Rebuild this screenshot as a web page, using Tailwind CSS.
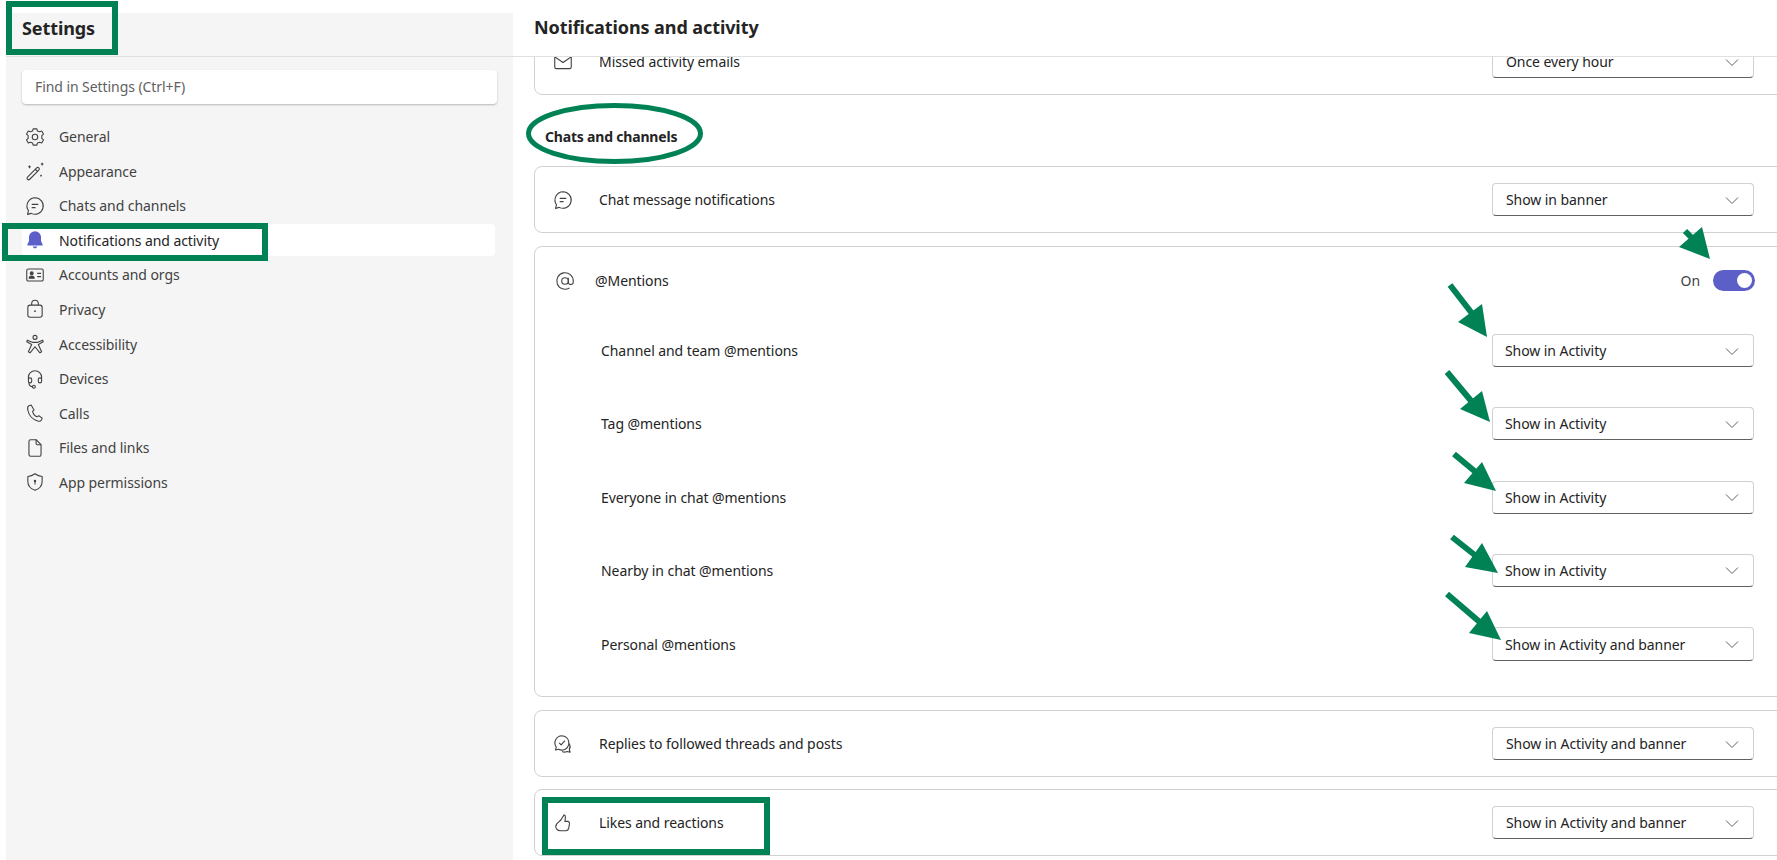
<!DOCTYPE html>
<html lang="en">

<head>
    <meta charset="UTF-8">
    <title>Settings</title>
    <script src="https://cdn.jsdelivr.net/npm/@tailwindcss/browser@4"></script>
</head>

<body class="bg-white text-[#242424] font-['Noto_Sans',sans-serif] text-[14px] tracking-[-0.07px]">
    <div class="relative flex w-[1777px] h-[860px] overflow-hidden pl-[6px]">

        <!-- sidebar -->
        <aside class="w-[507px] mt-[13px] shrink-0 bg-[#f5f5f5] flex flex-col">
            <div class="h-[44px] border-b border-[#e0e0e0] pl-[16px] pb-[13px] flex items-center">
                <h1 class="text-[18px] font-bold tracking-[-0.09px]">Settings</h1>
            </div>
            <div class="mt-[13px] mx-[16px] h-[34px] bg-white rounded-[4px] shadow-[0_1px_2px_rgba(0,0,0,0.25)] flex items-center px-[13px] pb-[1px] text-[#616161]">
                Find in Settings (Ctrl+F)
            </div>
            <nav class="mt-[16.5px] mx-[16px] w-[473px] flex flex-col gap-[2.6px] text-[#424242]">
                <a class="h-[32px] flex items-center gap-[13px] px-[2px]">
                    <svg class="w-[22px] h-[22px]" viewBox="0 0 20 20" fill="none" stroke="#424242"><circle cx="10" cy="10" r="2.5"/><path d="M8.3 2.6 7.8 4.6 5.8 5.2 3.9 4.6 2.3 7.3 3.8 8.7V11.3L2.3 12.7 3.9 15.4 5.8 14.8 7.8 15.4 8.3 17.4H11.7L12.2 15.4 14.2 14.8 16.1 15.4 17.7 12.7 16.2 11.3V8.7L17.7 7.3 16.1 4.6 14.2 5.2 12.2 4.6 11.7 2.6Z" stroke-linejoin="round"/></svg>
                    General
                </a>
                <a class="h-[32px] flex items-center gap-[13px] px-[2px]">
                    <svg class="w-[22px] h-[22px]" viewBox="0 0 20 20" fill="none" stroke="#424242"><path d="M3.2 15.5 11.5 7.2a1.4 1.4 0 0 1 2 2L5.2 17.5a1.4 1.4 0 0 1-2-2ZM10.3 8.4l2 2" stroke-linejoin="round"/><path d="M5 5v2.4M3.8 6.2h2.4M16.5 2.5v2.4M15.3 3.7h2.4M15.5 13.5v1.6M14.7 14.3h1.6"/></svg>
                    Appearance
                </a>
                <a class="h-[32px] flex items-center gap-[13px] px-[2px]">
                    <svg class="w-[22px] h-[22px]" viewBox="0 0 20 20" fill="none" stroke="#424242"><path d="M10 2.5a7.5 7.5 0 1 1-3.4 14.2l-3.4.9.9-3.3A7.5 7.5 0 0 1 10 2.500Z" stroke-linejoin="round"/><path d="M7 8.500h6M7 11.500h3.500"/></svg>
                    Chats and channels
                </a>
                <a class="h-[32px] flex items-center gap-[13px] px-[2px] bg-white rounded-[4px] text-[#242424]">
                    <svg class="w-[22px] h-[22px]" viewBox="0 0 20 20" fill="#5b5fc7"><path d="M10 2a5.500 5.500 0 0 0-5.500 5.500v3.300L3 14.300a.6.600 0 0 0 .5.800h13a.6.600 0 0 0 .5-.8l-1.500-3.500V7.500A5.500 5.500 0 0 0 10 2Z"/><path d="M7.800 16a2.300 2.300 0 0 0 4.400 0Z"/></svg>
                    Notifications and activity
                </a>
                <a class="h-[32px] flex items-center gap-[13px] px-[2px]">
                    <svg class="w-[22px] h-[22px]" viewBox="0 0 20 20" fill="none" stroke="#424242"><rect x="2.500" y="4.500" width="15" height="11" rx="1.500"/><circle cx="7" cy="8.500" r="1.300" fill="#424242"/><path d="M4.800 13c0-2.600 4.400-2.600 4.400 0Z" fill="#424242"/><path d="M12 8.500h3.500M12 11.500h3.500"/></svg>
                    Accounts and orgs
                </a>
                <a class="h-[32px] flex items-center gap-[13px] px-[2px]">
                    <svg class="w-[22px] h-[22px]" viewBox="0 0 20 20" fill="none" stroke="#424242"><rect x="3.500" y="6.500" width="13" height="11" rx="2"/><path d="M7 6.500V5a3 3 0 0 1 6 0v1.500"/><circle cx="10" cy="12" r=".8" fill="#424242" stroke="none"/></svg>
                    Privacy
                </a>
                <a class="h-[32px] flex items-center gap-[13px] px-[2px]">
                    <svg class="w-[22px] h-[22px]" viewBox="0 0 20 20" fill="none" stroke="#424242" stroke-linejoin="round"><circle cx="10" cy="4" r="1.800"/><path d="M3 6.500 7.500 8.500H12.500L17 6.500 17.500 8 13 10.500 16 17 14.500 18 10 12.500 5.500 18 4 17 7 10.500 2.500 8Z"/></svg>
                    Accessibility
                </a>
                <a class="h-[32px] flex items-center gap-[13px] px-[2px]">
                    <svg class="w-[22px] h-[22px]" viewBox="0 0 20 20" fill="none" stroke="#424242"><path d="M4 10V8.500a6 6 0 0 1 12 0V10"/><rect x="4" y="9" width="3" height="4.500" rx="1.500"/><rect x="13" y="9" width="3" height="4.500" rx="1.500"/><path d="M4.500 13.500c0 2.500 1.500 3.500 3.500 3.500"/><circle cx="9" cy="17" r="1.300"/></svg>
                    Devices
                </a>
                <a class="h-[32px] flex items-center gap-[13px] px-[2px]">
                    <svg class="w-[22px] h-[22px]" viewBox="0 0 20 20" fill="none" stroke="#424242" stroke-linejoin="round"><path d="M6.500 2.800 4.500 3.500C3.300 4 3 5.500 3.500 7.500 4.500 12 8 16 12.500 17.300c1.500.4 2.800 0 3.300-1l.7-1.600-3-2.200-1.700 1C10 12.800 8.300 10.500 7.800 8.500l1.300-1.300Z"/></svg>
                    Calls
                </a>
                <a class="h-[32px] flex items-center gap-[13px] px-[2px]">
                    <svg class="w-[22px] h-[22px]" viewBox="0 0 20 20" fill="none" stroke="#424242" stroke-linejoin="round"><path d="M4.500 4a1.500 1.500 0 0 1 1.500-1.500h5l4.500 4.500v9a1.500 1.500 0 0 1-1.500 1.500H6A1.500 1.500 0 0 1 4.500 16Z"/><path d="M11 2.500V6a1 1 0 0 0 1 1h3.500"/></svg>
                    Files and links
                </a>
                <a class="h-[32px] flex items-center gap-[13px] px-[2px]">
                    <svg class="w-[22px] h-[22px]" viewBox="0 0 20 20" fill="none" stroke="#424242" stroke-linejoin="round"><path d="M10 2.500c2 1.500 4.200 2.300 6.500 2.500v4.500c0 3.700-2.200 6.500-6.500 8-4.300-1.500-6.500-4.300-6.500-8V5C5.800 4.800 8 4 10 2.500Z"/><circle cx="10" cy="9" r="1.100" fill="#424242" stroke="none"/><path d="M10 9v3.200"/></svg>
                    App permissions
                </a>
            </nav>
        </aside>

        <!-- content -->
        <main class="flex-1 flex flex-col min-w-0">
            <div class="h-[57px] shrink-0 border-b border-[#e0e0e0] pl-[21px] pb-[2px] flex items-center">
                <h2 class="text-[18px] font-bold tracking-[-0.09px]">Notifications and activity</h2>
            </div>
            <div class="flex-1 overflow-hidden pl-[21px]">
                <div class="-mt-[29px] w-[1253px] flex flex-col">

                    <section class="h-[67px] border border-[#d1d1d1] rounded-[8px] flex items-center justify-between pl-[17px] pr-[32px]">
                        <div class="flex items-center gap-[25px]">
                            <svg class="w-[22px] h-[22px]" viewBox="0 0 20 20" fill="none" stroke="#424242"><rect x="2.500" y="4" width="15" height="12" rx="1.500"/><path d="M2.800 5.500 10 10.500l7.200-5"/></svg>
                            Missed activity emails
                        </div>
                        <div class="w-[262px] h-[33px] bg-white border border-[#d1d1d1] border-b-[#616161] rounded-[4px] flex items-center justify-between pl-[13px] pr-[13px]">
                            Once every hour
                            <svg class="w-[16px] h-[16px]" viewBox="0 0 16 16" fill="none" stroke="#616161"><path d="M2 5.500 8 11.500 14 5.500"/></svg>
                        </div>
                    </section>

                    <h3 class="h-[71px] pt-[11px] flex items-center pl-[11px] font-bold tracking-[-0.19px]">Chats and channels</h3>

                    <section class="h-[67px] border border-[#d1d1d1] rounded-[8px] flex items-center justify-between pl-[17px] pr-[32px]">
                        <div class="flex items-center gap-[25px]">
                            <svg class="w-[22px] h-[22px]" viewBox="0 0 20 20" fill="none" stroke="#424242"><path d="M10 2.500a7.500 7.500 0 1 1-3.400 14.200l-3.400.9.900-3.300A7.500 7.500 0 0 1 10 2.500Z" stroke-linejoin="round"/><path d="M7 8.500h6M7 11.500h3.500"/></svg>
                            Chat message notifications
                        </div>
                        <div class="w-[262px] h-[33px] bg-white border border-[#d1d1d1] border-b-[#616161] rounded-[4px] flex items-center justify-between pl-[13px] pr-[13px]">
                            Show in banner
                            <svg class="w-[16px] h-[16px]" viewBox="0 0 16 16" fill="none" stroke="#616161"><path d="M2 5.500 8 11.500 14 5.500"/></svg>
                        </div>
                    </section>

                    <section class="mt-[13px] h-[451px] border border-[#d1d1d1] rounded-[8px] flex flex-col pl-[19px] pr-[32px]">
                        <div class="h-[67px] shrink-0 flex items-center justify-between -mr-[1px]">
                            <div class="flex items-center gap-[19px]">
                                <svg class="w-[22px] h-[22px]" viewBox="0 0 20 20" fill="none" stroke="#424242"><circle cx="10" cy="10" r="3"/><path d="M13 7v4a2 2 0 0 0 4.500 0V10a7.500 7.500 0 1 0-3.500 6.300"/></svg>
                                @Mentions
                            </div>
                            <div class="flex items-center gap-[13px] text-[#424242]">
                                On
                                <div class="w-[42px] h-[21px] bg-[#5b5fc7] rounded-full flex items-center justify-end pr-[3px]">
                                    <div class="w-[15px] h-[15px] bg-white rounded-full"></div>
                                </div>
                            </div>
                        </div>
                        <div class="mt-[20px] flex flex-col gap-[40.25px] pl-[47px]">
                            <div class="flex items-center justify-between">
                                Channel and team @mentions
                                <div class="w-[262px] h-[33px] bg-white border border-[#d1d1d1] border-b-[#616161] rounded-[4px] flex items-center justify-between pl-[12px] pr-[13px]">
                                    Show in Activity
                                    <svg class="w-[16px] h-[16px]" viewBox="0 0 16 16" fill="none" stroke="#616161"><path d="M2 5.500 8 11.500 14 5.500"/></svg>
                                </div>
                            </div>
                            <div class="flex items-center justify-between">
                                Tag @mentions
                                <div class="w-[262px] h-[33px] bg-white border border-[#d1d1d1] border-b-[#616161] rounded-[4px] flex items-center justify-between pl-[12px] pr-[13px]">
                                    Show in Activity
                                    <svg class="w-[16px] h-[16px]" viewBox="0 0 16 16" fill="none" stroke="#616161"><path d="M2 5.500 8 11.500 14 5.500"/></svg>
                                </div>
                            </div>
                            <div class="flex items-center justify-between">
                                Everyone in chat @mentions
                                <div class="w-[262px] h-[33px] bg-white border border-[#d1d1d1] border-b-[#616161] rounded-[4px] flex items-center justify-between pl-[12px] pr-[13px]">
                                    Show in Activity
                                    <svg class="w-[16px] h-[16px]" viewBox="0 0 16 16" fill="none" stroke="#616161"><path d="M2 5.500 8 11.500 14 5.500"/></svg>
                                </div>
                            </div>
                            <div class="flex items-center justify-between">
                                Nearby in chat @mentions
                                <div class="w-[262px] h-[33px] bg-white border border-[#d1d1d1] border-b-[#616161] rounded-[4px] flex items-center justify-between pl-[12px] pr-[13px]">
                                    Show in Activity
                                    <svg class="w-[16px] h-[16px]" viewBox="0 0 16 16" fill="none" stroke="#616161"><path d="M2 5.500 8 11.500 14 5.500"/></svg>
                                </div>
                            </div>
                            <div class="flex items-center justify-between">
                                Personal @mentions
                                <div class="w-[262px] h-[34px] bg-white border border-[#d1d1d1] border-b-[#616161] rounded-[4px] flex items-center justify-between pl-[12px] pr-[13px]">
                                    Show in Activity and banner
                                    <svg class="w-[16px] h-[16px]" viewBox="0 0 16 16" fill="none" stroke="#616161"><path d="M2 5.500 8 11.500 14 5.500"/></svg>
                                </div>
                            </div>
                        </div>
                    </section>

                    <section class="mt-[13px] h-[67px] border border-[#d1d1d1] rounded-[8px] flex items-center justify-between pl-[17px] pr-[32px]">
                        <div class="flex items-center gap-[25px]">
                            <svg class="w-[22px] h-[22px]" viewBox="0 0 20 20" fill="none" stroke="#424242" stroke-linejoin="round"><path d="M9 2.500a6.500 6.500 0 1 1-3 12.300l-2.800.7.700-2.700A6.500 6.500 0 0 1 9 2.500Z"/><path d="M6.500 9 8.300 10.800 11.700 7"/><path d="M15.500 9.500a5 5 0 0 1 .2 5.500l.8 2.500-2.800-.7a5 5 0 0 1-4.500 0"/></svg>
                            Replies to followed threads and posts
                        </div>
                        <div class="w-[262px] h-[33px] bg-white border border-[#d1d1d1] border-b-[#616161] rounded-[4px] flex items-center justify-between pl-[13px] pr-[13px]">
                            Show in Activity and banner
                            <svg class="w-[16px] h-[16px]" viewBox="0 0 16 16" fill="none" stroke="#616161"><path d="M2 5.500 8 11.500 14 5.500"/></svg>
                        </div>
                    </section>

                    <section class="mt-[12px] h-[67px] border border-[#d1d1d1] rounded-[8px] flex items-center justify-between pl-[17px] pr-[32px]">
                        <div class="flex items-center gap-[25px]">
                            <svg class="w-[22px] h-[22px]" viewBox="0 0 20 20" fill="none" stroke="#424242" stroke-linejoin="round"><path d="M10.800 2.500c1 .2 1.500 1.200 1.400 2.500-.1 1.300-.3 2.500-.5 3.500h2.500c1.200 0 1.900 1 1.700 2.100l-.7 4.100c-.3 1.500-1.200 2.300-2.600 2.300H7.800c-1.500 0-2.700-.5-3.500-1.500-1-1.300-1-3.300 0-4.700 1-1.300 3-2.300 4.300-4.300.8-1.300 1.300-2.600 2.200-3.500Z"/></svg>
                            Likes and reactions
                        </div>
                        <div class="w-[262px] h-[33px] bg-white border border-[#d1d1d1] border-b-[#616161] rounded-[4px] flex items-center justify-between pl-[13px] pr-[13px]">
                            Show in Activity and banner
                            <svg class="w-[16px] h-[16px]" viewBox="0 0 16 16" fill="none" stroke="#616161"><path d="M2 5.500 8 11.500 14 5.500"/></svg>
                        </div>
                    </section>
                </div>
            </div>
        </main>

        <!-- green annotations drawn over the screenshot -->
        <svg class="absolute inset-0 pointer-events-none" width="1777" height="860" viewBox="0 0 1777 860" fill="none" stroke="#008255">
            <rect x="9" y="4" width="106" height="48" stroke-width="6"/>
            <rect x="5" y="226" width="260" height="32" stroke-width="6"/>
            <rect x="545" y="800" width="222" height="52" stroke-width="6"/>
            <ellipse cx="614.500" cy="133.500" rx="86" ry="28" stroke-width="5"/>
            <g stroke-width="6">
                <path d="M1685 231 1696 242"/>
                <path d="M1450 285 1474 316"/>
                <path d="M1447 372 1472 402"/>
                <path d="M1454 454 1478 474"/>
                <path d="M1452 537 1476 556"/>
                <path d="M1447 594 1482 624"/>
            </g>
            <g fill="#008255" stroke="none">
                <path d="M1710 259 1702 227 1679 247Z"/>
                <path d="M1487 337 1482 304 1458 322Z"/>
                <path d="M1490 422 1482 391 1460 409Z"/>
                <path d="M1496 491 1482 462 1464 483Z"/>
                <path d="M1498 573 1482 543 1465 567Z"/>
                <path d="M1501 640 1487 611 1469 633Z"/>
            </g>
        </svg>
    </div>
</body>

</html>
